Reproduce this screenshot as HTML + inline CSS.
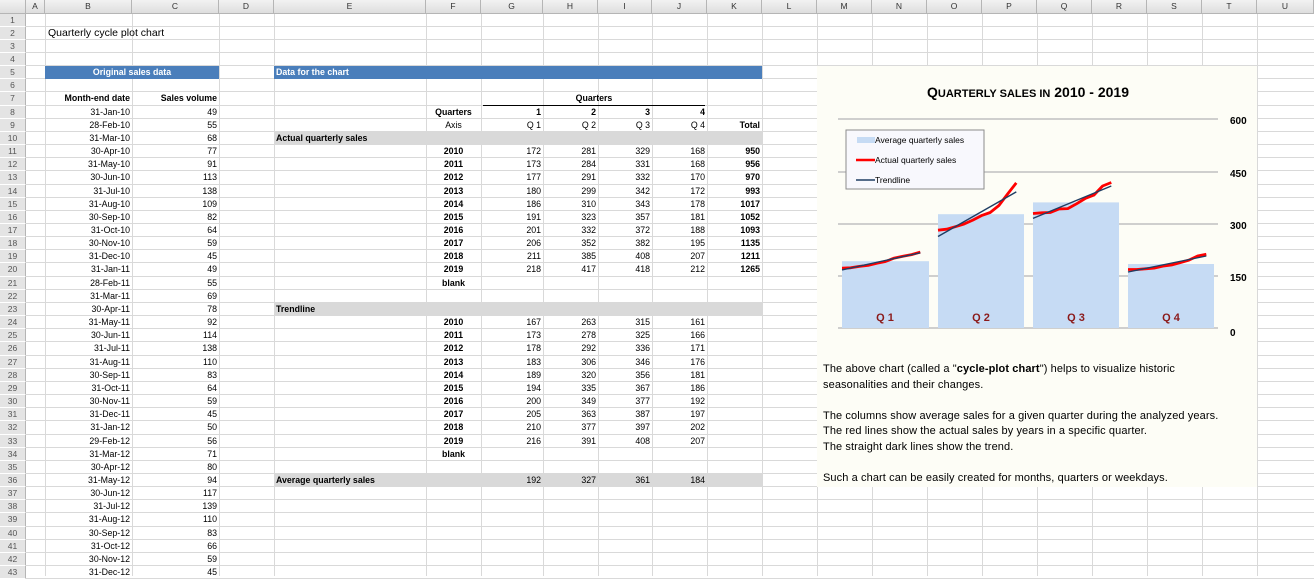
<!DOCTYPE html>
<html><head><meta charset="utf-8"><style>
*{margin:0;padding:0;box-sizing:border-box}
body{width:1314px;height:576px;overflow:hidden;background:#fff;font-family:"Liberation Sans",sans-serif;font-size:8.8px;color:#000;position:relative}
.vl{position:absolute;top:0;width:1px;height:576px;background:#d9d9d9}
#hdr{position:absolute;left:0;top:0;width:1314px;height:13.5px;background:linear-gradient(#f2f2f2,#dedede);border-bottom:1px solid #b5b5b5}
#hdr span{position:absolute;top:0;line-height:13px;text-align:center;color:#333;font-size:8.5px;border-right:1px solid #b5b5b5;height:13px}
#rows{position:absolute;left:0;top:13.5px;width:1314px}
.r{position:relative;height:13.16px;background:linear-gradient(#d9d9d9,#d9d9d9) bottom/100% 1px no-repeat}
.r span{position:absolute;top:0;line-height:13px;white-space:nowrap;padding:0 2px;height:13px}
.r .rh{left:0;width:26px;text-align:center;color:#555;background:#e4e4e4;border-right:1px solid #b5b5b5;border-bottom:1px solid #fff;font-size:8.5px;height:13.16px}
.B{left:45px;width:87px;text-align:right}
.C{left:132px;width:87px;text-align:right}
.F{left:426px;width:55px;text-align:center;font-weight:bold}
.G{left:481px;width:62px;text-align:right}
.H{left:543px;width:55px;text-align:right}
.I{left:598px;width:54px;text-align:right}
.J{left:652px;width:55px;text-align:right}
.K{left:707px;width:55px;text-align:right;font-weight:bold}
.b{font-weight:bold}
.blue{background:#4a7ebb;color:#fff;font-weight:bold;height:13.16px!important}
.gray{left:274px;width:488px;background:#d9d9d9;font-weight:bold;height:13.16px!important}
#txt{position:absolute;left:823px;top:362px;font-size:11px;line-height:15.6px;color:#000;letter-spacing:0.1px}
</style></head><body>
<div class="vl" style="left:45px"></div><div class="vl" style="left:132px"></div><div class="vl" style="left:219px"></div><div class="vl" style="left:274px"></div><div class="vl" style="left:426px"></div><div class="vl" style="left:481px"></div><div class="vl" style="left:543px"></div><div class="vl" style="left:598px"></div><div class="vl" style="left:652px"></div><div class="vl" style="left:707px"></div><div class="vl" style="left:762px"></div><div class="vl" style="left:817px"></div><div class="vl" style="left:872px"></div><div class="vl" style="left:927px"></div><div class="vl" style="left:982px"></div><div class="vl" style="left:1037px"></div><div class="vl" style="left:1092px"></div><div class="vl" style="left:1147px"></div><div class="vl" style="left:1202px"></div><div class="vl" style="left:1257px"></div>

<div id="hdr">
<span style="left:0;width:26px"></span>
<span style="left:26px;width:19px">A</span><span style="left:45px;width:87px">B</span><span style="left:132px;width:87px">C</span><span style="left:219px;width:55px">D</span><span style="left:274px;width:152px">E</span><span style="left:426px;width:55px">F</span><span style="left:481px;width:62px">G</span><span style="left:543px;width:55px">H</span><span style="left:598px;width:54px">I</span><span style="left:652px;width:55px">J</span><span style="left:707px;width:55px">K</span><span style="left:762px;width:55px">L</span><span style="left:817px;width:55px">M</span><span style="left:872px;width:55px">N</span><span style="left:927px;width:55px">O</span><span style="left:982px;width:55px">P</span><span style="left:1037px;width:55px">Q</span><span style="left:1092px;width:55px">R</span><span style="left:1147px;width:55px">S</span><span style="left:1202px;width:55px">T</span><span style="left:1257px;width:57px">U</span>
</div>

<div id="rows">
<div class="r"><span class="rh">1</span></div>
<div class="r"><span class="rh">2</span><span style="left:46px;font-size:10.5px">Quarterly cycle plot chart</span></div>
<div class="r"><span class="rh">3</span></div>
<div class="r"><span class="rh">4</span></div>
<div class="r"><span class="rh">5</span><span class="blue" style="left:45px;width:174px;text-align:center">Original sales data</span><span class="blue" style="left:274px;width:488px">Data for the chart</span></div>
<div class="r"><span class="rh">6</span></div>
<div class="r"><span class="rh">7</span><span class="B b">Month-end date</span><span class="C b">Sales volume</span><span style="left:483px;width:222px;text-align:center;font-weight:bold;border-bottom:1px solid #000;height:13.16px">Quarters</span></div>
<div class="r"><span class="rh">8</span><span class="B">31-Jan-10</span><span class="C">49</span><span class="F">Quarters</span><span class="G b">1</span><span class="H b">2</span><span class="I b">3</span><span class="J b">4</span></div>
<div class="r"><span class="rh">9</span><span class="B">28-Feb-10</span><span class="C">55</span><span class="F" style="font-weight:normal">Axis</span><span class="G">Q 1</span><span class="H">Q 2</span><span class="I">Q 3</span><span class="J">Q 4</span><span class="K">Total</span></div>
<div class="r"><span class="rh">10</span><span class="B">31-Mar-10</span><span class="C">68</span><span class="gray">Actual quarterly sales</span></div>
<div class="r"><span class="rh">11</span><span class="B">30-Apr-10</span><span class="C">77</span><span class="F">2010</span><span class="G">172</span><span class="H">281</span><span class="I">329</span><span class="J">168</span><span class="K">950</span></div>
<div class="r"><span class="rh">12</span><span class="B">31-May-10</span><span class="C">91</span><span class="F">2011</span><span class="G">173</span><span class="H">284</span><span class="I">331</span><span class="J">168</span><span class="K">956</span></div>
<div class="r"><span class="rh">13</span><span class="B">30-Jun-10</span><span class="C">113</span><span class="F">2012</span><span class="G">177</span><span class="H">291</span><span class="I">332</span><span class="J">170</span><span class="K">970</span></div>
<div class="r"><span class="rh">14</span><span class="B">31-Jul-10</span><span class="C">138</span><span class="F">2013</span><span class="G">180</span><span class="H">299</span><span class="I">342</span><span class="J">172</span><span class="K">993</span></div>
<div class="r"><span class="rh">15</span><span class="B">31-Aug-10</span><span class="C">109</span><span class="F">2014</span><span class="G">186</span><span class="H">310</span><span class="I">343</span><span class="J">178</span><span class="K">1017</span></div>
<div class="r"><span class="rh">16</span><span class="B">30-Sep-10</span><span class="C">82</span><span class="F">2015</span><span class="G">191</span><span class="H">323</span><span class="I">357</span><span class="J">181</span><span class="K">1052</span></div>
<div class="r"><span class="rh">17</span><span class="B">31-Oct-10</span><span class="C">64</span><span class="F">2016</span><span class="G">201</span><span class="H">332</span><span class="I">372</span><span class="J">188</span><span class="K">1093</span></div>
<div class="r"><span class="rh">18</span><span class="B">30-Nov-10</span><span class="C">59</span><span class="F">2017</span><span class="G">206</span><span class="H">352</span><span class="I">382</span><span class="J">195</span><span class="K">1135</span></div>
<div class="r"><span class="rh">19</span><span class="B">31-Dec-10</span><span class="C">45</span><span class="F">2018</span><span class="G">211</span><span class="H">385</span><span class="I">408</span><span class="J">207</span><span class="K">1211</span></div>
<div class="r"><span class="rh">20</span><span class="B">31-Jan-11</span><span class="C">49</span><span class="F">2019</span><span class="G">218</span><span class="H">417</span><span class="I">418</span><span class="J">212</span><span class="K">1265</span></div>
<div class="r"><span class="rh">21</span><span class="B">28-Feb-11</span><span class="C">55</span><span class="F">blank</span></div>
<div class="r"><span class="rh">22</span><span class="B">31-Mar-11</span><span class="C">69</span></div>
<div class="r"><span class="rh">23</span><span class="B">30-Apr-11</span><span class="C">78</span><span class="gray">Trendline</span></div>
<div class="r"><span class="rh">24</span><span class="B">31-May-11</span><span class="C">92</span><span class="F">2010</span><span class="G">167</span><span class="H">263</span><span class="I">315</span><span class="J">161</span></div>
<div class="r"><span class="rh">25</span><span class="B">30-Jun-11</span><span class="C">114</span><span class="F">2011</span><span class="G">173</span><span class="H">278</span><span class="I">325</span><span class="J">166</span></div>
<div class="r"><span class="rh">26</span><span class="B">31-Jul-11</span><span class="C">138</span><span class="F">2012</span><span class="G">178</span><span class="H">292</span><span class="I">336</span><span class="J">171</span></div>
<div class="r"><span class="rh">27</span><span class="B">31-Aug-11</span><span class="C">110</span><span class="F">2013</span><span class="G">183</span><span class="H">306</span><span class="I">346</span><span class="J">176</span></div>
<div class="r"><span class="rh">28</span><span class="B">30-Sep-11</span><span class="C">83</span><span class="F">2014</span><span class="G">189</span><span class="H">320</span><span class="I">356</span><span class="J">181</span></div>
<div class="r"><span class="rh">29</span><span class="B">31-Oct-11</span><span class="C">64</span><span class="F">2015</span><span class="G">194</span><span class="H">335</span><span class="I">367</span><span class="J">186</span></div>
<div class="r"><span class="rh">30</span><span class="B">30-Nov-11</span><span class="C">59</span><span class="F">2016</span><span class="G">200</span><span class="H">349</span><span class="I">377</span><span class="J">192</span></div>
<div class="r"><span class="rh">31</span><span class="B">31-Dec-11</span><span class="C">45</span><span class="F">2017</span><span class="G">205</span><span class="H">363</span><span class="I">387</span><span class="J">197</span></div>
<div class="r"><span class="rh">32</span><span class="B">31-Jan-12</span><span class="C">50</span><span class="F">2018</span><span class="G">210</span><span class="H">377</span><span class="I">397</span><span class="J">202</span></div>
<div class="r"><span class="rh">33</span><span class="B">29-Feb-12</span><span class="C">56</span><span class="F">2019</span><span class="G">216</span><span class="H">391</span><span class="I">408</span><span class="J">207</span></div>
<div class="r"><span class="rh">34</span><span class="B">31-Mar-12</span><span class="C">71</span><span class="F">blank</span></div>
<div class="r"><span class="rh">35</span><span class="B">30-Apr-12</span><span class="C">80</span></div>
<div class="r"><span class="rh">36</span><span class="B">31-May-12</span><span class="C">94</span><span class="gray">Average quarterly sales</span><span class="G">192</span><span class="H">327</span><span class="I">361</span><span class="J">184</span></div>
<div class="r"><span class="rh">37</span><span class="B">30-Jun-12</span><span class="C">117</span></div>
<div class="r"><span class="rh">38</span><span class="B">31-Jul-12</span><span class="C">139</span></div>
<div class="r"><span class="rh">39</span><span class="B">31-Aug-12</span><span class="C">110</span></div>
<div class="r"><span class="rh">40</span><span class="B">30-Sep-12</span><span class="C">83</span></div>
<div class="r"><span class="rh">41</span><span class="B">31-Oct-12</span><span class="C">66</span></div>
<div class="r"><span class="rh">42</span><span class="B">30-Nov-12</span><span class="C">59</span></div>
<div class="r"><span class="rh">43</span><span class="B">31-Dec-12</span><span class="C">45</span></div>
</div>

<svg style="position:absolute;left:0;top:0" width="1314" height="576" font-family="Liberation Sans, sans-serif">
<rect x="817" y="66" width="440" height="421" fill="#fdfdf6"/>
<text x="1028" y="97" text-anchor="middle" font-weight="bold" font-size="14">Q<tspan font-size="11">UARTERLY SALES IN</tspan> 2010 - 2019</text>
<g stroke="#c0c0c0" stroke-width="1.5">
<line x1="838" y1="119" x2="1218" y2="119"/><line x1="838" y1="172" x2="1218" y2="172"/><line x1="838" y1="224" x2="1218" y2="224"/><line x1="838" y1="276" x2="1218" y2="276"/><line x1="838" y1="328" x2="1218" y2="328"/>
</g>
<g font-size="10" font-weight="bold" fill="#000">
<text x="1230" y="124">600</text><text x="1230" y="177">450</text><text x="1230" y="229">300</text><text x="1230" y="281">150</text><text x="1230" y="336">0</text>
</g>
<g fill="#c6dbf4">
<rect x="842" y="261.2" width="87" height="66.8"/><rect x="938" y="214.2" width="86" height="113.8"/><rect x="1033" y="202.4" width="86" height="125.6"/><rect x="1128" y="264" width="86" height="64"/>
</g>
<g font-size="11" font-weight="bold" fill="#8b1a1a" text-anchor="middle">
<text x="885" y="321">Q 1</text><text x="981" y="321">Q 2</text><text x="1076" y="321">Q 3</text><text x="1171" y="321">Q 4</text>
</g>
<g fill="none" stroke="#ff0000" stroke-width="2.8" stroke-linejoin="round">
<polyline points="842,268.1 850.7,267.8 859.4,266.4 868.1,265.4 876.8,263.3 885.5,261.5 894.2,258.1 902.9,256.3 911.6,254.6 920.3,252.1"/>
<polyline points="938,230.2 946.7,229.2 955.4,226.7 964.1,224 972.8,220.1 981.5,215.6 990.2,212.5 998.9,205.5 1007.6,194 1016.3,182.9"/>
<polyline points="1033,213.5 1041.7,212.8 1050.4,212.5 1059.1,209 1067.8,208.6 1076.5,203.8 1085.2,198.5 1093.9,195.1 1102.6,186 1111.3,182.5"/>
<polyline points="1128,269.5 1136.7,269.5 1145.4,268.8 1154.1,268.1 1162.8,266.1 1171.5,265 1180.2,262.6 1188.9,260.1 1197.6,256 1206.3,254.2"/>
</g>
<g fill="none" stroke="#1f3d63" stroke-width="1.4">
<polyline points="842,269.9 920.3,252.8"/><polyline points="938,236.5 1016.3,191.9"/><polyline points="1033,218.4 1111.3,186"/><polyline points="1128,272 1206.3,256"/>
</g>
<rect x="846" y="130" width="138" height="59" fill="#f8f8fd" stroke="#8c8c8c" stroke-width="1"/>
<rect x="857" y="137" width="18" height="6" fill="#c6dbf4"/>
<line x1="856" y1="160" x2="875" y2="160" stroke="#ff0000" stroke-width="2.5"/>
<line x1="856" y1="180" x2="875" y2="180" stroke="#1f3d63" stroke-width="1.4"/>
<g font-size="8.5" fill="#000">
<text x="875" y="143">Average quarterly sales</text><text x="875" y="163">Actual quarterly sales</text><text x="875" y="183">Trendline</text>
</g>
</svg>
<div id="txt">
The above chart (called a "<b>cycle-plot chart</b>") helps to visualize historic<br>seasonalities and their changes.<br><br>
The columns show average sales for a given quarter during the analyzed years.<br>The red lines show the actual sales by years in a specific quarter.<br>The straight dark lines show the trend.<br><br>
Such a chart can be easily created for months, quarters or weekdays.
</div>
</body></html>
